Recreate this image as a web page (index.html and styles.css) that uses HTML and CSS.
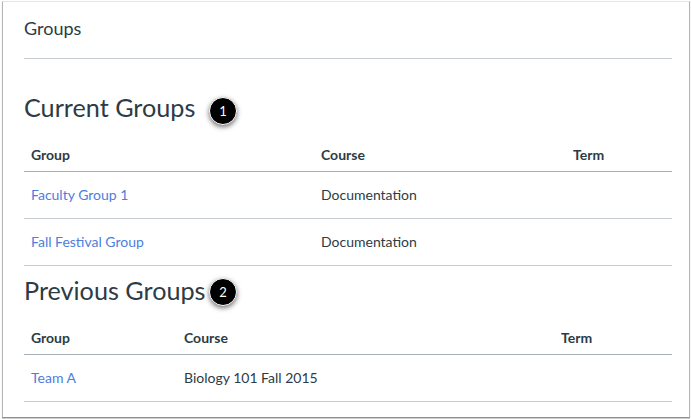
FILE: index.html
```html
<!DOCTYPE html>
<html lang="en">
<head>
<meta charset="utf-8">
<title>Groups</title>
<link rel="stylesheet" href="styles.css">
</head>
<body>
<main class="panel">
  <header class="crumb">Groups</header>
  <section class="section first">
    <h2 class="heading">Current Groups<span class="badge badge-one">1</span></h2>
    <table class="groups current">
      <thead><tr><th class="c1">Group</th><th class="c2">Course</th><th class="c3">Term</th></tr></thead>
      <tbody>
        <tr><td><a href="#">Faculty Group 1</a></td><td>Documentation</td><td></td></tr>
        <tr><td><a href="#">Fall Festival Group</a></td><td>Documentation</td><td></td></tr>
      </tbody>
    </table>
  </section>
  <section class="section second">
    <h2 class="heading">Previous Groups<span class="badge badge-two">2</span></h2>
    <table class="groups previous">
      <thead><tr><th class="c1">Group</th><th class="c2">Course</th><th class="c3">Term</th></tr></thead>
      <tbody>
        <tr><td><a href="#">Team A</a></td><td>Biology 101 Fall 2015</td><td></td></tr>
      </tbody>
    </table>
  </section>
</main>
</body>
</html>
```
FILE: styles.css
```css
* { box-sizing: border-box; }
html, body { margin: 0; height: 100%; background: #fff; }
body { padding: 1px 1px 1px 2px; font-family: Lato, "Open Sans", sans-serif; color: #2d3b45; overflow: hidden; }
.panel {
  height: 417px;
  padding: 0 17px 0 21px;
  background: #fff;
  border-top: 1px solid #e6e6e6;
  border-left: 1px solid #b4b4b4;
  border-right: 1px solid #b4b4b4;
  border-bottom: 1px solid #8f8f8f;
  box-shadow: 0 1px 1px #cfcfcf;
}
.crumb {
  height: 57px;
  padding-top: 16px;
  font-size: 18px;
  line-height: 20px;
  border-bottom: 1px solid #c7cdd1;
}
.section { position: relative; }
.heading {
  position: relative;
  margin: 0;
  font-size: 25.2px;
  font-weight: 400;
  line-height: 32px;
}
.first .heading { padding-top: 32px; height: 82px; }
.second .heading { padding-top: 8px; height: 59px; }
.badge {
  position: absolute;
  left: 185px;
  width: 28px;
  height: 28px;
  border-radius: 50%;
  background: #000;
  border: 1px solid #fff;
  box-shadow: 0 2px 5px rgba(0,0,0,.55);
  color: #fff;
  font-size: 13px;
  line-height: 26px;
  text-align: center;
}
.badge-one { top: 38px; }
.badge-two { top: 12px; }
.groups { width: 648px; border-collapse: collapse; table-layout: fixed; font-size: 14px; }
.groups th {
  height: 30px;
  padding: 0 7px 2px 7px;
  font-weight: 700;
  text-align: left;
  border-bottom: 1px solid #a5afb5;
}
.groups td {
  height: 47px;
  padding: 0 7px;
  border-bottom: 1px solid #c7cdd1;
}
.previous th { padding-bottom: 4px; }
.previous td { padding-bottom: 2px; }
.groups a { color: #4c7ede; text-decoration: none; }
.current .c1 { width: 290px; }
.current .c2 { width: 252px; }
.current .c3 { width: 106px; }
.previous .c1 { width: 153px; }
.previous .c2 { width: 377px; }
.previous .c3 { width: 118px; }
```
